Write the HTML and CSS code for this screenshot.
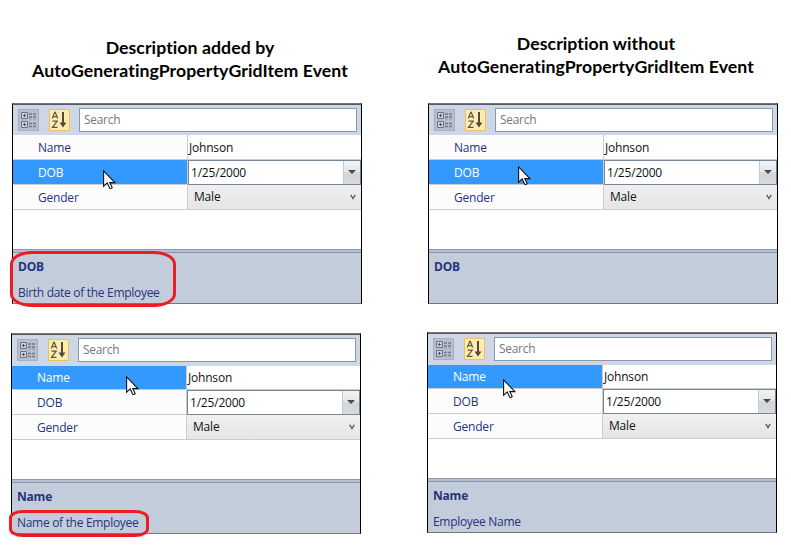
FILE: index.html
```
<!DOCTYPE html>
<html lang="en">
<head>
<meta charset="utf-8">
<title>Property grid descriptions</title>
<link rel="stylesheet" href="styles.css">
</head>
<body>
<svg class="defs" width="0" height="0">
  <symbol id="categorized" viewBox="0 0 21 22">
    <rect x=".5" y=".5" width="20" height="21" fill="#b5bfcd" stroke="#a4afbf"/>
    <path d="M3.500 3.500h6v6h-6zM3.500 12.500h6v6h-6z" fill="#c9d1dc" stroke="#6c7480"/>
    <path d="M5 6.500h3M6.500 5v3M5 15.500h3M6.500 14v3" stroke="#4d5663"/>
    <path d="M11 5h3M15 5h3M11 8h3M15 8h3M11 14.500h3M15 14.500h3M11 17.500h3M15 17.500h3" stroke="#737b87" stroke-width="1.400"/>
    <path d="M11 10h3M15 10h3" stroke="#98a0ac"/>
  </symbol>
  <symbol id="sorted" viewBox="0 0 21 22">
    <rect x=".5" y=".5" width="20" height="21" fill="#ffebad" stroke="#e5c365"/>
    <path d="M3.300 9.500L5.700 3.400h.6L8.700 9.500M4.200 7.600h3.600M3.500 12.200h4.700L3.500 18.300h5" fill="none" stroke="#5b5743" stroke-width="1.200"/>
    <path d="M14 3v12" stroke="#4c4b43" stroke-width="2"/>
    <path d="M10.500 13.500h7L14 18.500z" fill="#4c4b43"/>
  </symbol>
  <symbol id="pointer" viewBox="0 0 13 20">
    <path d="M.6.9v15.300l3.600-3.300 2.500 5.300q1.200.8 2.500-.6l-2.400-5h5.100z" fill="#fff" stroke="#111" stroke-width="1.100"/>
  </symbol>
</svg>
<main class="page">
  <section class="column column-left">
    <h1>Description added by<br>AutoGeneratingPropertyGridItem Event</h1>
    <div class="panel">
      <div class="toolbar"><svg class="cat"><use href="#categorized"/></svg><svg class="az"><use href="#sorted"/></svg><div class="search">Search</div></div>
      <div class="row"><div class="label">Name</div><div class="value">Johnson</div></div>
      <div class="row selected"><div class="label">DOB</div><div class="value date"><span>1/25/2000</span><i class="drop"></i></div></div>
      <div class="row"><div class="label">Gender</div><div class="value combo"><span>Male</span><svg class="chevron" viewBox="0 0 6 6"><path d="M.7.8L3 4.500 5.300.8"/></svg></div></div>
      <div class="empty"></div>
      <div class="description"><b>DOB</b><p>Birth date of the Employee</p></div>
      <svg class="pointer p1"><use href="#pointer"/></svg>
      <div class="ring ring-large"></div>
    </div>
    <div class="panel lower">
      <div class="toolbar"><svg class="cat"><use href="#categorized"/></svg><svg class="az"><use href="#sorted"/></svg><div class="search">Search</div></div>
      <div class="row selected"><div class="label">Name</div><div class="value">Johnson</div></div>
      <div class="row"><div class="label">DOB</div><div class="value date"><span>1/25/2000</span><i class="drop"></i></div></div>
      <div class="row"><div class="label">Gender</div><div class="value combo"><span>Male</span><svg class="chevron" viewBox="0 0 6 6"><path d="M.7.8L3 4.500 5.300.8"/></svg></div></div>
      <div class="empty"></div>
      <div class="description"><b>Name</b><p>Name of the Employee</p></div>
      <svg class="pointer p2"><use href="#pointer"/></svg>
      <div class="ring ring-small"></div>
    </div>
  </section>
  <section class="column column-right">
    <h1>Description without<br>AutoGeneratingPropertyGridItem Event</h1>
    <div class="panel">
      <div class="toolbar"><svg class="cat"><use href="#categorized"/></svg><svg class="az"><use href="#sorted"/></svg><div class="search">Search</div></div>
      <div class="row"><div class="label">Name</div><div class="value">Johnson</div></div>
      <div class="row selected"><div class="label">DOB</div><div class="value date"><span>1/25/2000</span><i class="drop"></i></div></div>
      <div class="row"><div class="label">Gender</div><div class="value combo"><span>Male</span><svg class="chevron" viewBox="0 0 6 6"><path d="M.7.8L3 4.500 5.300.8"/></svg></div></div>
      <div class="empty"></div>
      <div class="description"><b>DOB</b></div>
      <svg class="pointer p3"><use href="#pointer"/></svg>
    </div>
    <div class="panel lower">
      <div class="toolbar"><svg class="cat"><use href="#categorized"/></svg><svg class="az"><use href="#sorted"/></svg><div class="search">Search</div></div>
      <div class="row selected"><div class="label">Name</div><div class="value">Johnson</div></div>
      <div class="row"><div class="label">DOB</div><div class="value date"><span>1/25/2000</span><i class="drop"></i></div></div>
      <div class="row"><div class="label">Gender</div><div class="value combo"><span>Male</span><svg class="chevron" viewBox="0 0 6 6"><path d="M.7.8L3 4.500 5.300.8"/></svg></div></div>
      <div class="empty"></div>
      <div class="description"><b>Name</b><p>Employee Name</p></div>
      <svg class="pointer p4"><use href="#pointer"/></svg>
    </div>
  </section>
</main>
</body>
</html>
```
FILE: styles.css
```
* { box-sizing: border-box; }
body {
  margin: 0;
  background: #fff;
  overflow: hidden;
  font: 12px/16px "Open Sans", "Noto Sans", sans-serif;
  letter-spacing: -0.2px;
  color: #111;
}
.defs { position: absolute; }
.page { display: flex; width: 791px; height: 548px; }
.column { width: 350px; flex: none; }
.column-left { margin-left: 12px; padding-top: 36px; }
.column-right { margin-left: 66px; padding-top: 32px; }
h1 {
  height: 67px;
  margin: 0;
  padding-left: 6px;
  font: bold 17.7px/23px Lato, "Open Sans", sans-serif;
  font-variant-ligatures: none;
  letter-spacing: 0.06px;
  text-align: center;
  white-space: nowrap;
  color: #000;
}
.column-right h1 { height: 71px; padding-left: 0; padding-right: 14px; }
.panel {
  position: relative;
  display: flex;
  flex-direction: column;
  width: 350px;
  height: 201px;
  border: 1px solid #000;
  border-top-color: #777;
  border-bottom-color: #777;
}
.lower { margin: 29px 0 0 -1px; }
.column-right .lower { margin-top: 28px; }
.toolbar {
  display: flex;
  height: 31px;
  padding: 3px 4px 4px 5px;
  background: #cfd6e5;
  border-top: 1px solid #555b65;
}
.cat { width: 21px; height: 22px; margin-top: 1px; }
.az { width: 21px; height: 22px; margin: 1px 0 0 10px; }
.search {
  flex: 1;
  height: 24px;
  margin-left: 9px;
  padding: 3px 4px;
  border: 1px solid #8998ab;
  background: #fff;
  color: #777;
  letter-spacing: -0.3px;
}
.row { display: flex; height: 25px; border-bottom: 1px solid #ccc; }
.lower .toolbar { height: 32px; }
.lower .row.selected { height: 24px; }
.lower .selected .label, .lower .selected .value { padding-top: 4px; }
.label {
  width: 175px;
  padding: 5px 0 0 25px;
  border-right: 1px solid #ccc;
  background: #fcfcfc;
  color: #25347d;
}
.selected .label { background: #3399ff; color: #fff; }
.value { flex: 1; display: flex; padding: 5px 0 0 1px; }
.row .date {
  margin: 0 0 -1px;
  height: 25px;
  padding: 4px 0 0 2px;
  border: 1px solid #758696;
  background: #fff;
  justify-content: space-between;
}
.drop {
  position: relative;
  width: 17px;
  height: 23px;
  margin-top: -4px;
  border-left: 1px solid #c6c9cc;
  background: linear-gradient(#f3f3f3, #e4e5e6 48%, #d3d5d7 50%, #d9dadc);
}
.drop::after {
  content: "";
  position: absolute;
  left: 4px;
  top: 9px;
  border: solid transparent;
  border-width: 4px 4px 0;
  border-top-color: #454b55;
}
.combo {
  padding: 4px 5px 0 6px;
  justify-content: space-between;
  background: linear-gradient(#f0f0f0, #e5e5e5);
}
.chevron { width: 6px; height: 6px; margin-top: 5px; fill: none; stroke: #555; stroke-width: 1.3; }
.empty { flex: 1; }
.description {
  height: 54px;
  padding: 9px 5px 0;
  background: #c3ccdb;
  border-top: 1px solid #8d9bb0;
  box-shadow: inset 0 2px #b4bfd0, inset 0 3px #8797ad;
  color: #25347d;
}
.description b { display: block; font-weight: 700; }
.description p { margin: 10px 0 0; letter-spacing: -0.3px; }
.pointer { position: absolute; width: 13px; height: 20px; }
.p1 { left: 90px; top: 66px; }
.p2 { left: 114px; top: 42px; }
.p3 { left: 89px; top: 62px; }
.p4 { left: 75px; top: 46px; }
.ring { position: absolute; border: 3px solid #ed1c24; }
.ring-large { left: -3px; top: 147px; width: 166px; height: 56px; border-radius: 22px / 13px; }
.ring-small { left: -3px; top: 176px; width: 140px; height: 27px; border-radius: 14px / 8px; }
```
